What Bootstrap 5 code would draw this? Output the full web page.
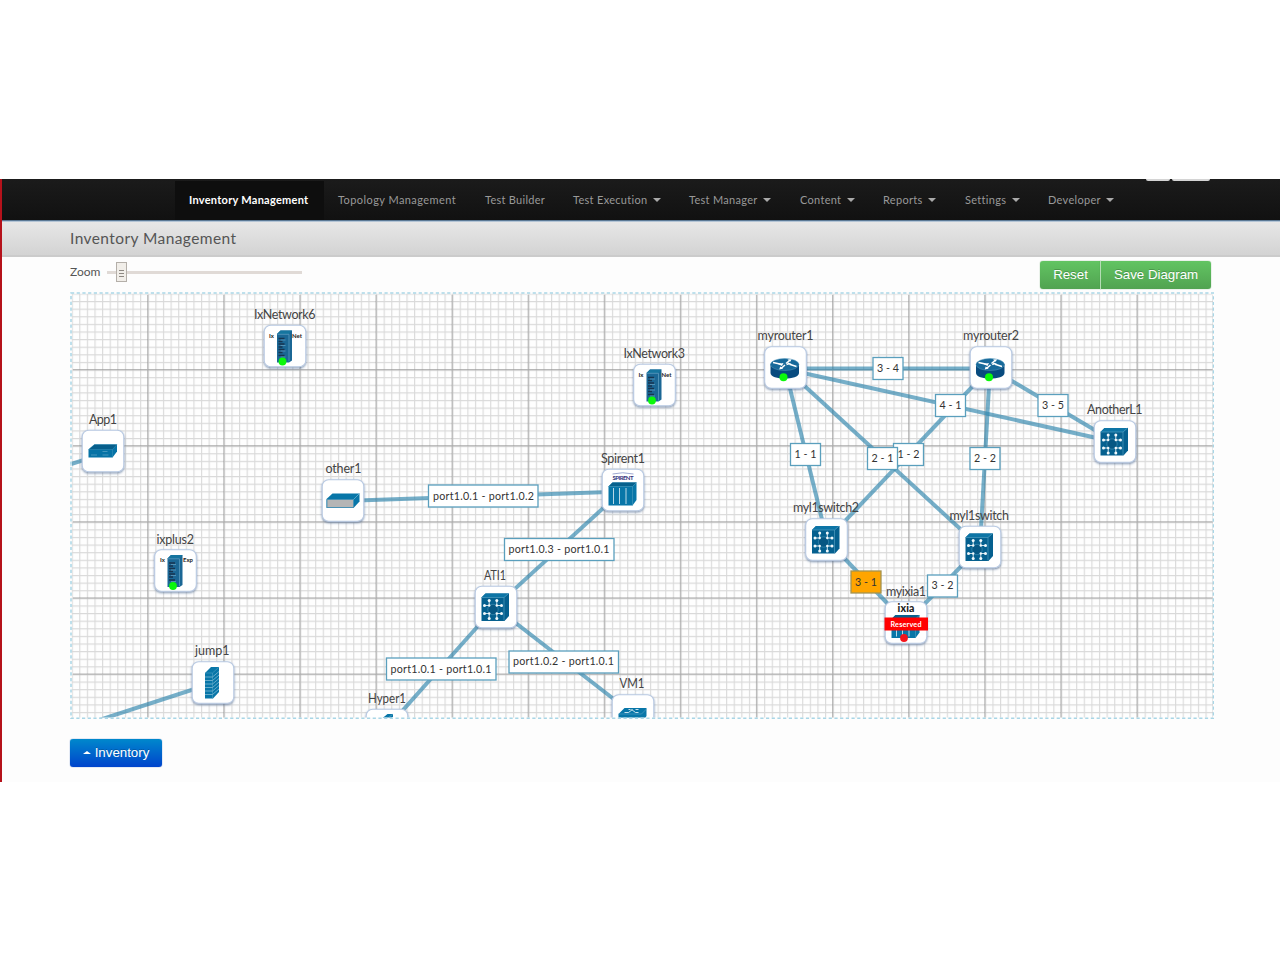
<!DOCTYPE html>
<html lang="en">
<head>
<meta charset="utf-8">
<meta name="viewport" content="width=device-width, initial-scale=1">
<title>Inventory Management</title>
<link href="https://cdn.jsdelivr.net/npm/bootstrap@5.3.0/dist/css/bootstrap.min.css" rel="stylesheet">
<style>
body{font-family:Lato,"Open Sans",sans-serif;background:#fff;padding-top:179px;height:960px;overflow:hidden}
.app{height:603px;background:#fdfdfd;border-left:2px solid #b5121b}
.topbar{height:42px;background:linear-gradient(#1b1b1b,#111);border-bottom:1px solid #5b7995;padding:0 0 0 173px;position:relative}
.topbar .nav-link{height:39px;margin-top:2px;padding:0 0 0 14px;font-size:11px;line-height:38px;color:#999;white-space:nowrap;letter-spacing:.43px}
.topbar .nav-link.w-build{letter-spacing:.27px}
.topbar .nav-link.dropdown-toggle{letter-spacing:.3px}
.topbar .nav-link.active{background:#0e0e0e;color:#fff;font-weight:700;letter-spacing:.27px}
.topbar .dropdown-toggle::after{border-width:4px 4px 0;margin-left:5.500px;vertical-align:2px;color:#aaa}
.w-inv{width:149px}.w-topo{width:147px}.w-build{width:88px}.w-exec{width:116px}.w-man{width:111px}.w-cont{width:83px}.w-rep{width:82px}.w-set{width:83px}.w-dev{width:95px}
.topstub{top:0;right:70px;gap:2px}
.topstub span{height:2px;background:#d4d4d4;border-radius:0 0 2px 2px}
.stub-s{width:24px}.stub-l{width:38px}
.titlebar{height:36px;background:linear-gradient(#e7e7e7,#d3d3d3);border-top:1px solid #b4c5d6;border-bottom:2px solid #cbcbcb;padding-left:68px}
.titlebar h1{font-size:15.5px;line-height:32px;color:#555;letter-spacing:.42px;font-weight:400}
.work{padding:4px 0 0 68px;width:1212px}
.tools{height:31px;width:1141px}
.zoomtext{font-size:12px;line-height:22px;color:#555;width:37px}
.track{width:195px;height:3px;background:#e0dad6;margin-top:10px}
.thumb{left:9px;top:-9px;width:11px;height:20px;border:1.5px solid #b4afa9;background:#f1eee9}
.thumb i{width:5px;height:1px;background:#8d8882;margin-bottom:2px}
.btn-flat{font-family:"Liberation Sans",sans-serif;font-size:13.3px;line-height:18px;color:#fff;border:0;padding:5px 0;height:28px;border-radius:3px;text-shadow:0 -1px 0 rgba(0,0,0,.2)}
.btn-flat:hover{color:#fff}
.btn-green{background:linear-gradient(#62c462,#51a351);box-shadow:0 0 1px #3f8f3f}
.btn-group>.b-reset{width:61px;flex:none}.btn-group>.b-save{width:111px;flex:none;border-left:1px solid #b5dcb5}
.board{display:block;width:1144px;height:427px}
.btn-blue{width:92px;height:28px;margin-top:19.5px;background:linear-gradient(#0088cc,#0044cc);box-shadow:0 0 1px #0044aa}
.upcaret{display:inline-block;border:4px solid transparent;border-top:0;border-bottom:3px solid #fff;vertical-align:3px;margin-right:4px}
.links{stroke:#2f86ad;stroke-opacity:.66;stroke-width:4}
.node-name text{font-size:12.5px;fill:#444}
.port rect{fill:#fff;stroke:#5a9fbd;stroke-width:1.3}
.port text{font-size:10.7px;fill:#333;text-anchor:middle}
</style>
</head>
<body>
<div class="app">
  <nav class="topbar">
    <div class="nav flex-nowrap">
      <a class="nav-link active w-inv" href="#">Inventory Management</a>
      <a class="nav-link w-topo" href="#">Topology Management</a>
      <a class="nav-link w-build" href="#">Test Builder</a>
      <a class="nav-link dropdown-toggle w-exec" href="#">Test Execution</a>
      <a class="nav-link dropdown-toggle w-man" href="#">Test Manager</a>
      <a class="nav-link dropdown-toggle w-cont" href="#">Content</a>
      <a class="nav-link dropdown-toggle w-rep" href="#">Reports</a>
      <a class="nav-link dropdown-toggle w-set" href="#">Settings</a>
      <a class="nav-link dropdown-toggle w-dev" href="#">Developer</a>
    </div>
    <div class="topstub position-absolute d-flex"><span class="stub-s"></span><span class="stub-l"></span></div>
  </nav>
  <header class="titlebar"><h1 class="m-0">Inventory Management</h1></header>
  <main class="work">
    <div class="tools d-flex align-items-start">
      <span class="zoomtext">Zoom</span>
      <div class="track position-relative"><div class="thumb position-absolute d-flex flex-column align-items-center justify-content-center pt-1"><i></i><i></i><i></i></div></div>
      <div class="btn-group ms-auto">
        <button class="btn btn-flat btn-green b-reset" type="button">Reset</button>
        <button class="btn btn-flat btn-green b-save" type="button">Save Diagram</button>
      </div>
    </div>
    <svg class="board" viewBox="70 292 1144 427" font-family="Lato, sans-serif">
      <defs>
        <pattern id="minor" x="71.6" y="293.4" width="7.61" height="7.61" patternUnits="userSpaceOnUse">
          <path d="M0 .6H7.61M.6 0V7.61" stroke="#999" stroke-opacity=".36" stroke-width="1.1"/>
        </pattern>
        <pattern id="major" x="71" y="293" width="76.1" height="76.1" patternUnits="userSpaceOnUse">
          <path d="M0 .7H76.1M.7 0V76.1" stroke="#777" stroke-opacity=".5" stroke-width="1.2"/>
        </pattern>
        <filter id="soft" x="-20%" y="-20%" width="140%" height="150%"><feDropShadow dx="0" dy="1.2" stdDeviation="1" flood-color="#42608c" flood-opacity=".65"/></filter>
        <g id="tile"><rect x=".7" y=".7" width="41.6" height="41.6" rx="6.5" fill="#fff" stroke="#b9cae3" stroke-width="1.1" filter="url(#soft)"/></g>
        <g id="tower">
          <use href="#tile"/>
          <path d="M13.5 9.5L17 6h11.5v30l-3 2h-12z" fill="#1b6795"/>
          <path d="M13.5 9.5L17 6h11.5L25.500 9.500z" fill="#16759f"/>
          <path d="M14 9.800h11.500V37" fill="none" stroke="#5c9cc0" stroke-width=".8"/>
          <path d="M15 14h6M15 17h4M15 19.500h6M15 22.500h4M15 25h6M15 28h4M15 31h6" stroke="#173450" stroke-width="1.500"/>
          <path d="M17 15.500h5M17 21h5M17 26.500h5M17 32.500h5" stroke="#6ba2c2" stroke-width=".7"/>
          <circle cx="19" cy="37" r="3.900" fill="#0bf80b"/>
        </g>
        <g id="switch">
          <use href="#tile"/>
          <path d="M7 12l4-4h23.500v22.500l-4.500 5H7z" fill="#05608f"/>
          <path d="M7 12l4-4h23.500l-4.500 4z" fill="#0d75a6"/>
          <path d="M7 12h22.500v23M29.500 12L34 8" fill="none" stroke="#5da4c6" stroke-width=".6"/>
          <circle cx="18.500" cy="24" r="5.200" fill="#075783" stroke="#3e8db3" stroke-width=".7"/>
          <g stroke="#fff" stroke-width=".8" fill="none"><path d="M14.700 20v-5M22.300 20v-5M14.700 28v5M22.300 28v5M15 20h-5M15 28h-5M22 20h5M22 28h5"/></g>
          <g fill="#f2f9fc"><circle cx="14.700" cy="15" r="1.500"/><circle cx="22.300" cy="15" r="1.500"/><circle cx="14.700" cy="33" r="1.500"/><circle cx="22.300" cy="33" r="1.500"/><circle cx="10" cy="20" r="1.500"/><circle cx="10" cy="28" r="1.500"/><circle cx="27" cy="20" r="1.500"/><circle cx="27" cy="28" r="1.500"/><circle cx="14.700" cy="20" r="1.200"/><circle cx="22.300" cy="20" r="1.200"/><circle cx="14.700" cy="28" r="1.200"/><circle cx="22.300" cy="28" r="1.200"/></g>
        </g>
        <g id="router">
          <use href="#tile"/>
          <path d="M6.500 18v9c0 7.500 28.500 7.500 28.500 0v-9z" fill="#084b7f"/>
          <ellipse cx="20.700" cy="18.500" rx="14.200" ry="6" fill="#17699a" stroke="#5598bc" stroke-width=".5"/>
          <g stroke="#fff" stroke-width="1.500" fill="none"><path d="M9 16.500l8 1.700M32.500 20.500l-7-2.200M17 22.500l4-3.500M22 17.500l4-3.300"/></g>
          <path d="M19.500 17l-1.500 3-4-2zM22 19.200l2.200-2.700 3.500 1.400zM15.200 23.500l1-3 3 2zM27.500 13.200l-4 .2 2.800 2.300z" fill="#fff"/>
          <circle cx="19.500" cy="31.300" r="4" fill="#0bf80b"/>
        </g>
        <g id="chassis">
          <path d="M7 18l4-4h24v17.500L31 37H7z" fill="#0876a8"/>
          <path d="M7 18l4-4h24l-4 4z" fill="#07618d"/>
          <path d="M7 18h24v19M31 18l4-4" fill="none" stroke="#4d9dc0" stroke-width=".6"/>
          <path d="M12 19.500v16M18 19.500v16M24.500 19.500v16" stroke="#b9d8e6" stroke-width="1"/>
        </g>
      </defs>
      <rect x="71" y="293" width="1142" height="426" fill="#fefefe"/>
      <rect x="71" y="293" width="1142" height="426" fill="url(#minor)"/>
      <rect x="73" y="295" width="1140" height="424" fill="url(#major)"/>

      <g class="links">
        <path d="M785 368.500H990" fill="none"/><path d="M785 369L1115 442" fill="none"/><path d="M785 368L827 540" fill="none"/><path d="M785 368L980 547" fill="none"/><path d="M990 368L827 540" fill="none"/><path d="M990 368L980 547" fill="none"/><path d="M990 368L1115 442" fill="none"/><path d="M827 540L906 623" fill="none"/><path d="M980 547L906 623" fill="none"/>
        <path d="M343 501L623 491.500M623 490L495 607M495 607L387 728M495 607L633 714M213 683L90 723M103 454L60 467.500" fill="none"/>
      </g>

      <g class="node-name">
        <text x="254" y="319" textLength="61.500">IxNetwork6</text>
        <text x="623.500" y="358" textLength="61.500">IxNetwork3</text>
        <text x="89" y="424" textLength="28">App1</text>
        <text x="325.500" y="473" textLength="36">other1</text>
        <text x="601" y="463" textLength="44">Spirent1</text>
        <text x="156.500" y="543.500" textLength="37.500">ixplus2</text>
        <text x="195" y="655" textLength="34.500">jump1</text>
        <text x="484" y="579.500" textLength="22" lengthAdjust="spacingAndGlyphs">ATI1</text>
        <text x="368" y="702.500" textLength="38" lengthAdjust="spacingAndGlyphs">Hyper1</text>
        <text x="619.500" y="688" textLength="25" lengthAdjust="spacingAndGlyphs">VM1</text>
        <text x="757.500" y="340" textLength="56">myrouter1</text>
        <text x="963" y="340" textLength="56">myrouter2</text>
        <text x="1087" y="414" textLength="55.500">AnotherL1</text>
        <text x="793" y="512" textLength="66">myl1switch2</text>
        <text x="949.500" y="520" textLength="59.500">myl1switch</text>
        <text x="886" y="596" textLength="40">myixia1</text>
      </g>

      <g class="port">
        <rect x="873" y="357.500" width="30" height="22"/><text x="888" y="372" textLength="22">3 - 4</text>
        <rect x="935.500" y="394.500" width="30" height="22"/><text x="950.500" y="409" textLength="22">4 - 1</text>
        <rect x="1038" y="394.500" width="30" height="22"/><text x="1053" y="409" textLength="22">3 - 5</text>
        <rect x="893.500" y="443.500" width="30" height="22"/><text x="908.500" y="458" textLength="22">1 - 2</text>
        <rect x="867.500" y="447.500" width="30" height="22"/><text x="882.500" y="461.500" textLength="22">2 - 1</text>
        <rect x="970" y="447.500" width="30" height="22"/><text x="985" y="461.500" textLength="22">2 - 2</text>
        <rect x="790.500" y="443.500" width="30" height="22"/><text x="805.500" y="457.500" textLength="22">1 - 1</text>
        <rect x="851" y="571" width="30" height="22" style="fill:#ffa500;stroke:#a49350"/><text x="866" y="585.500" textLength="22">3 - 1</text>
        <rect x="927.500" y="575" width="30" height="22"/><text x="942.500" y="589" textLength="22">3 - 2</text>
        <rect x="428.500" y="485" width="109.500" height="22"/><text x="483.500" y="499.500" textLength="101">port1.0.1 - port1.0.2</text>
        <rect x="504.500" y="538.500" width="109.500" height="22"/><text x="559" y="553" textLength="101">port1.0.3 - port1.0.1</text>
        <rect x="386.500" y="658" width="109.500" height="22"/><text x="441" y="672.500" textLength="101">port1.0.1 - port1.0.1</text>
        <rect x="509" y="651" width="109.500" height="22"/><text x="563.500" y="665" textLength="101">port1.0.2 - port1.0.1</text>
      </g>

      <g font-size="6" font-weight="700" fill="#222">
        <use href="#tower" x="263.500" y="324.500"/><text x="269" y="337.500">Ix</text><text x="292" y="337.500">Net</text>
        <use href="#tower" x="633" y="363.500"/><text x="638.500" y="376.500">Ix</text><text x="661.500" y="376.500">Net</text>
        <use href="#tower" x="154" y="549"/><text x="160" y="562">Ix</text><text x="183" y="562">Exp</text>
      </g>
      <g transform="translate(81.500 429.500)"><use href="#tile"/><path d="M7 20l6-5h22.500v7L31 28H7z" fill="#0673a6"/><path d="M7 20l6-5h22.500L31 20zM31 20v8" fill="#075f8c" stroke="#4d9dc0" stroke-width=".4"/><path d="M9.500 25.500h6M21 22h5M21 25.500h6" stroke="#4c9bc0" stroke-width=".9"/></g>
      <g transform="translate(321.500 479)"><use href="#tile"/><path d="M5 20l6-5.500h27v8L32 29H5z" fill="#0876a8"/><path d="M5.500 20.500h26.500v8H5.500z" fill="#b5b5b5" stroke="#4591b5" stroke-width=".8"/><path d="M32 20.500l6-6" stroke="#6ab0cf" stroke-width=".8"/></g>
      <g transform="translate(601.500 468.500)"><use href="#tile"/><use href="#chassis"/><path d="M11 5.500Q21 3 32 5.500" fill="none" stroke="#8593c5" stroke-width=".8"/><text x="21.500" y="11.700" font-size="6" font-weight="700" fill="#33337d" text-anchor="middle" textLength="21">SPIRENT</text></g>
      <g transform="translate(191.500 661)"><use href="#tile"/><path d="M13.500 12l6-6h8v25l-6 6.500h-8z" fill="#0876a8"/><path d="M13.500 12h7.500l6.500-6M21 12v25.500" fill="none" stroke="#4fa2c5" stroke-width=".6"/><path d="M13.500 16H21l6.500-5.500M13.500 19.500H21l6.500-5.500M13.500 23H21l6.500-5.500M13.500 26.500H21l6.500-5.500M13.500 30H21l6.500-5.500M13.500 33.500H21l6.500-5.500" fill="none" stroke="#7db9d3" stroke-width=".8"/></g>
      <use href="#switch" x="474.500" y="585.500"/>
      <use href="#switch" x="1093.500" y="420"/>
      <use href="#switch" x="805" y="518"/>
      <use href="#switch" x="958.500" y="525.500"/>
      <use href="#router" x="764" y="346"/>
      <use href="#router" x="969.500" y="346"/>
      <g transform="translate(365.500 708.500)"><use href="#tile"/><path d="M14 12L22 5.500h5.500V8L24 12z" fill="#0876a8"/><path d="M19 9.500h3.500l5-4" fill="none" stroke="#69adcb" stroke-width=".6"/></g>
      <g transform="translate(611.500 694)"><use href="#tile"/><path d="M7 20l6-6h22v8L30 30H7z" fill="#0876a8"/><path d="M7 20h23l5-5" fill="none" stroke="#5ba6c6" stroke-width=".6"/><path d="M13 18.500h4l4-3M20 15.500l4 3h3M17 15.500h2M24 15.500h3" fill="none" stroke="#dceef6" stroke-width=".9"/></g>
      <g transform="translate(884.500 601)"><use href="#tile"/><use href="#chassis" x="0" y="0"/><text x="21.500" y="10.800" font-size="10.500" font-weight="900" fill="#222" text-anchor="middle" textLength="17">ixia</text><path d="M0 16.500h43.500v13H0z" fill="#f00"/><text x="21.500" y="25.500" font-size="7.200" font-weight="700" fill="#fff" text-anchor="middle" textLength="31">Reserved</text><circle cx="19.500" cy="37" r="3.900" fill="#f5141c"/></g>
      <path d="M70 719v-.5" fill="none"/>
      <rect x="71" y="293" width="1142.500" height="425.300" fill="none" stroke="#fdfdfd" stroke-width="1.500"/>
      <rect x="71" y="293" width="1142.500" height="425.300" fill="none" stroke="#a9d6e6" stroke-width="1.500" stroke-dasharray="3.200 2.500"/>
    </svg>
    <button class="btn btn-flat btn-blue" type="button"><span class="upcaret"></span>Inventory</button>
  </main>
</div>
<script src="https://cdn.jsdelivr.net/npm/bootstrap@5.3.0/dist/js/bootstrap.bundle.min.js"></script>
</body>
</html>
